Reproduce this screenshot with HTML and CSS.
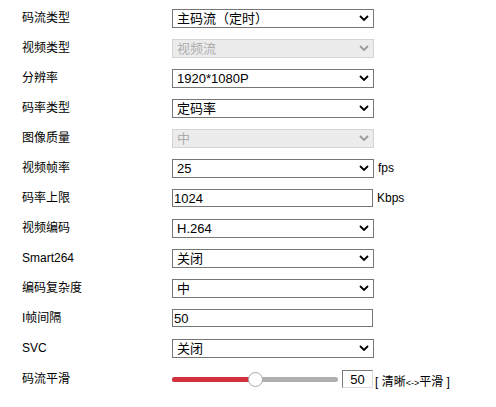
FILE: index.html
```html
<!DOCTYPE html>
<html lang="zh-CN">
<head>
    <meta charset="UTF-8">
    <title>码流参数</title>
    <link rel="stylesheet" href="styles.css">
</head>
<body>
    <form class="params">
        <div class="row">
            <label class="name">码流类型</label>
            <span class="pick">
                <select><option>主码流（定时）</option></select>
                <svg class="arrow" viewBox="0 0 10 6"><polyline points="1,1 5,5 9,1"/></svg>
            </span>
        </div>
        <div class="row">
            <label class="name">视频类型</label>
            <span class="pick off">
                <select disabled><option>视频流</option></select>
                <svg class="arrow" viewBox="0 0 10 6"><polyline points="1,1 5,5 9,1"/></svg>
            </span>
        </div>
        <div class="row">
            <label class="name">分辨率</label>
            <span class="pick">
                <select><option>1920*1080P</option></select>
                <svg class="arrow" viewBox="0 0 10 6"><polyline points="1,1 5,5 9,1"/></svg>
            </span>
        </div>
        <div class="row">
            <label class="name">码率类型</label>
            <span class="pick">
                <select><option>定码率</option></select>
                <svg class="arrow" viewBox="0 0 10 6"><polyline points="1,1 5,5 9,1"/></svg>
            </span>
        </div>
        <div class="row">
            <label class="name">图像质量</label>
            <span class="pick off">
                <select disabled><option>中</option></select>
                <svg class="arrow" viewBox="0 0 10 6"><polyline points="1,1 5,5 9,1"/></svg>
            </span>
        </div>
        <div class="row">
            <label class="name">视频帧率</label>
            <span class="pick">
                <select><option>25</option></select>
                <svg class="arrow" viewBox="0 0 10 6"><polyline points="1,1 5,5 9,1"/></svg>
            </span>
            <span class="unit">fps</span>
        </div>
        <div class="row">
            <label class="name">码率上限</label>
            <input class="text" type="text" value="1024">
            <span class="unit">Kbps</span>
        </div>
        <div class="row">
            <label class="name">视频编码</label>
            <span class="pick">
                <select><option>H.264</option></select>
                <svg class="arrow" viewBox="0 0 10 6"><polyline points="1,1 5,5 9,1"/></svg>
            </span>
        </div>
        <div class="row">
            <label class="name">Smart264</label>
            <span class="pick">
                <select><option>关闭</option></select>
                <svg class="arrow" viewBox="0 0 10 6"><polyline points="1,1 5,5 9,1"/></svg>
            </span>
        </div>
        <div class="row">
            <label class="name">编码复杂度</label>
            <span class="pick">
                <select><option>中</option></select>
                <svg class="arrow" viewBox="0 0 10 6"><polyline points="1,1 5,5 9,1"/></svg>
            </span>
        </div>
        <div class="row">
            <label class="name">I帧间隔</label>
            <input class="text" type="text" value="50">
        </div>
        <div class="row">
            <label class="name">SVC</label>
            <span class="pick">
                <select><option>关闭</option></select>
                <svg class="arrow" viewBox="0 0 10 6"><polyline points="1,1 5,5 9,1"/></svg>
            </span>
        </div>
        <!-- 码流平滑 -->
        <div class="row last">
            <label class="name">码流平滑</label>
            <div class="slider">
                <div class="fill" style="width: 50%;"></div>
                <div class="thumb" style="left: 50%;"></div>
            </div>
            <input class="num" type="text" value="50">
            <span class="hint">[ 清晰<small>&lt;-&gt;</small>平滑 ]</span>
        </div>
    </form>
</body>
</html>
```

FILE: styles.css
```css
body {
    margin: 0;
    font-family: "Liberation Sans", Arial, "Noto Sans CJK SC", sans-serif;
    font-size: 12px;
    color: #000;
    background: #fff;
}
.params {
    padding: 3px 0 0 22px;
}
.row {
    display: flex;
    align-items: center;
    height: 30px;
}
.row.last {
    margin-top: 1px;
}
.name {
    width: 150px;
    line-height: 14px;
}
.pick {
    position: relative;
    display: block;
    width: 202px;
    height: 19px;
}
.pick select {
    appearance: none;
    -webkit-appearance: none;
    width: 100%;
    height: 19px;
    margin: 0;
    padding: 0 0 0 4px;
    border: 1px solid #767676;
    border-radius: 0;
    background: #fff;
    color: #000;
    font: 13px "Liberation Sans", Arial, "Noto Sans CJK SC", sans-serif;
    line-height: 17px;
}
.arrow {
    position: absolute;
    right: 5px;
    top: 6px;
    width: 10px;
    height: 6px;
    fill: none;
    stroke: #000;
    stroke-width: 1.8;
    pointer-events: none;
}
.pick.off select {
    background: #e5e5e5;
    border-color: #c2c2c2;
    color: #8a8a8a;
}
.pick.off .arrow {
    stroke: #9a9a9a;
}
.text {
    width: 201px;
    height: 18px;
    margin: 0;
    padding: 0 0 0 1px;
    box-sizing: border-box;
    border: 1px solid #767676;
    border-radius: 0;
    font: 13px "Liberation Sans", Arial, "Noto Sans CJK SC", sans-serif;
    color: #000;
}
.unit {
    margin-left: 4px;
}
.slider {
    position: relative;
    width: 166px;
    height: 5px;
    border-radius: 3px;
    background: #b0b0b0;
}
.fill {
    height: 100%;
    border-radius: 3px 0 0 3px;
    background: #d2303a;
}
.thumb {
    position: absolute;
    top: -5px;
    width: 13px;
    height: 13px;
    margin-left: -7px;
    border: 1px solid #a8a8a8;
    border-radius: 50%;
    background: #fff;
}
.num {
    width: 31px;
    height: 18px;
    margin: 0 0 0 4px;
    padding: 0;
    box-sizing: border-box;
    border: 1px solid;
    border-color: #7a7a7a #dcdcdc #dcdcdc #7a7a7a;
    border-radius: 0;
    text-align: center;
    font: 13px "Liberation Sans", Arial, sans-serif;
    color: #000;
}
.hint {
    margin-left: 2px;
    margin-top: 3px;
}
.hint small {
    font-size: 9px;
}
```
